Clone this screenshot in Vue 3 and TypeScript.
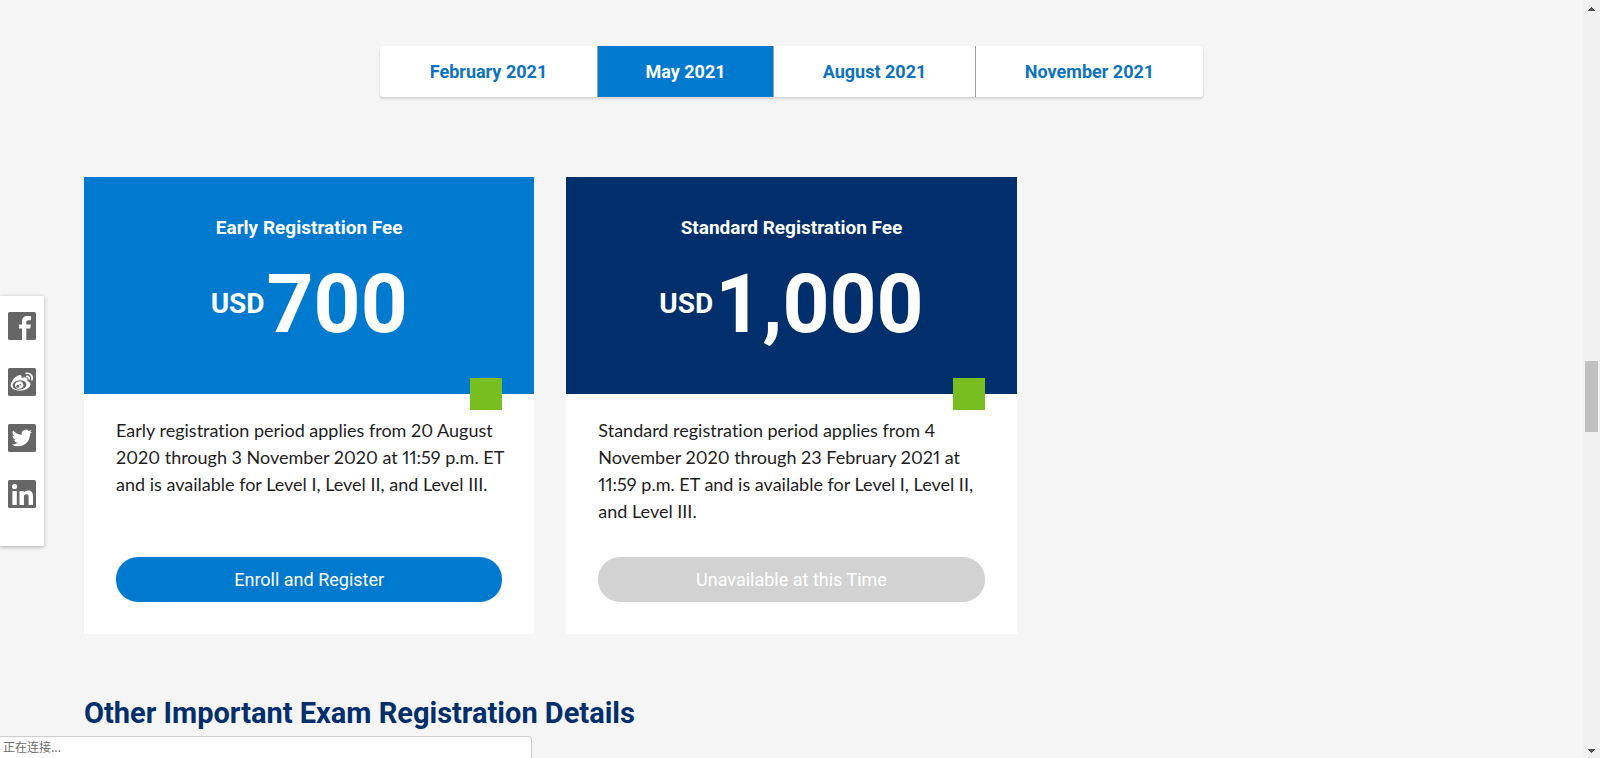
<script setup lang="ts">
import { ref } from 'vue'

interface Fee {
  title: string
  amount: string
  lines: string[]
  action: string
  tone: 'early' | 'standard'
  available: boolean
}

const months: string[] = ['February 2021', 'May 2021', 'August 2021', 'November 2021']
const active = ref<string>('May 2021')

const fees: Fee[] = [
  {
    title: 'Early Registration Fee',
    amount: '700',
    lines: [
      'Early registration period applies from 20 August',
      '2020 through 3 November 2020 at 11:59 p.m. ET',
      'and is available for Level I, Level II, and Level III.',
    ],
    action: 'Enroll and Register',
    tone: 'early',
    available: true,
  },
  {
    title: 'Standard Registration Fee',
    amount: '1,000',
    lines: [
      'Standard registration period applies from 4',
      'November 2020 through 23 February 2021 at',
      '11:59 p.m. ET and is available for Level I, Level II,',
      'and Level III.',
    ],
    action: 'Unavailable at this Time',
    tone: 'standard',
    available: false,
  },
]
</script>

<template>
  <div class="page">
    <main class="content">
      <nav class="tabs" aria-label="Exam window">
        <button
          v-for="month in months"
          :key="month"
          type="button"
          class="tab"
          :class="{ active: month === active }"
          :aria-pressed="month === active"
          @click="active = month"
        >{{ month }}</button>
      </nav>

      <section class="cards">
        <article v-for="fee in fees" :key="fee.title" class="card">
          <header class="card-head" :class="fee.tone">
            <h3 class="card-title">{{ fee.title }}</h3>
            <p class="price"><span class="currency">USD</span><span class="amount">{{ fee.amount }}</span></p>
            <span class="marker"></span>
          </header>
          <div class="card-body">
            <p class="card-text">{{ fee.lines.join('\n') }}</p>
            <button type="button" class="action" :disabled="!fee.available">{{ fee.action }}</button>
          </div>
        </article>
      </section>

      <h2 class="heading">Other Important Exam Registration Details</h2>
    </main>

    <aside class="share">
      <a href="#facebook" aria-label="Facebook">
        <svg viewBox="0 0 28 28">
          <rect width="28" height="28" rx="1.5" fill="#666" />
          <path fill="#fff" d="M14 28V16.500h-3v-4h3V9.600C14 6 16 4 19.300 4c1.600 0 2.900.1 3.700.2v4h-2.200c-1.900 0-2.500.9-2.500 2.300v2h4.500l-.6 4h-3.900V28z" />
        </svg>
      </a>
      <a href="#weibo" aria-label="Weibo">
        <svg viewBox="0 0 28 28">
          <rect width="28" height="28" rx="1.5" fill="#666" />
          <path fill="#fff" d="M11.5 7c1.8-.3 2.5.9 1.9 3 2.7-1 6.300-1.100 6 1.700 0 .7-.5 1.200.3 1.500 5 1.600 2.500 6.300-1.500 8.100-5.700 2.700-14.700 1.200-15.500-3.500C2.200 13.800 7.800 7.600 11.500 7z" />
          <ellipse cx="11.500" cy="17" rx="7" ry="4.600" fill="#666" transform="rotate(-6 11.500 17)" />
          <ellipse cx="11.100" cy="17.200" rx="4.200" ry="3.600" fill="#fff" transform="rotate(-20 11 17)" />
          <circle cx="9.800" cy="18.200" r="1.500" fill="#666" />
          <circle cx="12.300" cy="16.800" r=".7" fill="#666" />
          <path fill="none" stroke="#fff" stroke-width="1.700" stroke-linecap="round" d="M18.200 5.400c3.900-.8 7 2.500 5.700 6.300M18.800 8.500c1.600-.3 2.800 1 2.300 2.500" />
        </svg>
      </a>
      <a href="#twitter" aria-label="Twitter">
        <svg viewBox="0 0 28 28">
          <rect width="28" height="28" rx="1.5" fill="#666" />
          <path fill="#fff" transform="translate(3.700 3.800) scale(.85)" d="M23.950 4.570a10 10 0 0 1-2.820.770 4.960 4.960 0 0 0 2.160-2.720c-.950.560-2 .960-3.130 1.190a4.920 4.920 0 0 0-8.380 4.480C7.690 8.100 4.070 6.130 1.640 3.160a4.820 4.820 0 0 0-.670 2.480c0 1.710.870 3.210 2.190 4.100a4.900 4.900 0 0 1-2.230-.620v.060a4.920 4.920 0 0 0 3.950 4.830 5 5 0 0 1-2.210.080 4.940 4.940 0 0 0 4.600 3.420A9.870 9.870 0 0 1 0 19.540a13.990 13.990 0 0 0 7.550 2.210c9.050 0 14-7.500 14-13.980 0-.210 0-.420-.020-.630a9.940 9.940 0 0 0 2.460-2.550z" />
        </svg>
      </a>
      <a href="#linkedin" aria-label="LinkedIn">
        <svg viewBox="0 0 28 28">
          <rect width="28" height="28" rx="1.5" fill="#666" />
          <circle cx="6.600" cy="6.500" r="2.600" fill="#fff" />
          <path fill="#fff" d="M4.400 11h4.400v14H4.400zM11.500 11h4.200v1.900c.7-1.300 2.200-2.300 4.300-2.300 4.100 0 5 2.600 5 6.200V25h-4.400v-7.200c0-1.700-.1-3.500-2.200-3.500-2.200 0-2.500 1.700-2.500 3.400V25h-4.400z" />
        </svg>
      </a>
    </aside>

    <div class="scrollbar" aria-hidden="true">
      <svg viewBox="0 0 7 4"><path fill="#505050" d="M3 0h1v1h1v1h1v1h1v1H0V3h1V2h1V1h1z" /></svg>
      <span class="thumb"></span>
      <svg viewBox="0 0 7 4"><path fill="#505050" d="M0 0h7v1H6v1H5v1H4v1H3V3H2V2H1V1H0z" /></svg>
    </div>

    <div class="status">正在连接...</div>
  </div>
</template>

<style>
body {
  margin: 0;
  background: #f5f5f5;
}
</style>

<style scoped>
.page {
  box-sizing: border-box;
  min-height: 100vh;
  padding-right: 17px;
  background: #f5f5f5;
  font-family: Roboto, "Liberation Sans", sans-serif;
}

.content {
  display: flex;
  flex-direction: column;
  padding: 46px 84px 8px;
}

.tabs {
  display: grid;
  grid-template-columns: 218fr 176fr 202fr 227fr;
  align-self: center;
  width: 823px;
  max-width: 100%;
  overflow: hidden;
  border-radius: 4px;
  background: #fff;
  box-shadow: 0 2px 3px rgba(0, 0, 0, 0.15);
}

.tab {
  padding: 12px 0;
  border: 0;
  border-right: 1px solid #a0a0a0;
  background: #fff;
  color: #0d72bf;
  font: bold 18px/27px Roboto, "Liberation Sans", sans-serif;
  white-space: nowrap;
  cursor: pointer;
}

.tab:last-child {
  border-right: 0;
}

.tab.active {
  background: #007acf;
  color: #fff;
}

.cards {
  display: grid;
  grid-template-columns: repeat(3, minmax(0, 1fr));
  gap: 32px;
  margin-top: 80px;
}

.card {
  display: flex;
  flex-direction: column;
  background: #fff;
}

.card-head {
  position: relative;
  padding: 37px 32px 46px;
  color: #fff;
  text-align: center;
}

.early {
  background: #007acf;
}

.standard {
  background: #002f6c;
}

.card-title {
  margin: 0;
  font-size: 19px;
  line-height: 27px;
}

.price {
  display: flex;
  align-items: center;
  justify-content: center;
  gap: 2px;
  margin: 19px 0 0;
  font-weight: bold;
  line-height: 88px;
}

.currency {
  font-size: 28px;
}

.amount {
  font-size: 82px;
}

.marker {
  position: absolute;
  right: 32px;
  bottom: -16px;
  width: 32px;
  height: 32px;
  background: #78be20;
}

.card-body {
  display: flex;
  flex: 1;
  flex-direction: column;
  justify-content: space-between;
  gap: 32px;
  padding: 23px 32px 32px;
}

.card-text {
  margin: 0;
  color: #1e1e1e;
  font: 18px/27px Lato, sans-serif;
  font-variant-numeric: proportional-nums;
  font-variant-ligatures: none;
  white-space: pre;
}

.action {
  height: 45px;
  border: 0;
  border-radius: 22px;
  background: #007acf;
  color: #fff;
  font: 18px/27px Roboto, "Liberation Sans", sans-serif;
  cursor: pointer;
}

.action:disabled {
  background: #d2d2d2;
  color: #fff;
  cursor: default;
}

.heading {
  margin: 59px 0 0;
  color: #002f6c;
  font-size: 29px;
  line-height: 40px;
}

.share {
  position: fixed;
  top: 296px;
  left: 0;
  display: flex;
  flex-direction: column;
  gap: 28px;
  padding: 16px 8px 38px;
  background: #fff;
  box-shadow: 0 1px 4px rgba(0, 0, 0, 0.3);
}

.share a,
.share svg {
  display: block;
  width: 28px;
  height: 28px;
}

.scrollbar {
  position: fixed;
  top: 0;
  right: 0;
  bottom: 0;
  display: flex;
  flex-direction: column;
  align-items: center;
  justify-content: space-between;
  box-sizing: border-box;
  width: 17px;
  padding: 7px 0 5px;
  background: #f1f1f1;
}

.scrollbar svg {
  width: 7px;
  height: 4px;
}

.thumb {
  width: 13px;
  height: 71px;
  margin-top: 32px;
  background: #c1c1c1;
}

.status {
  position: fixed;
  bottom: 0;
  left: 0;
  box-sizing: border-box;
  width: 532px;
  height: 22px;
  padding-left: 3px;
  border: 1px solid #cdcdcd;
  border-width: 1px 1px 0 0;
  border-radius: 0 4px 0 0;
  background: #fff;
  color: #6b6b6b;
  font: 12px/20px "Noto Sans CJK SC", sans-serif;
}
</style>
